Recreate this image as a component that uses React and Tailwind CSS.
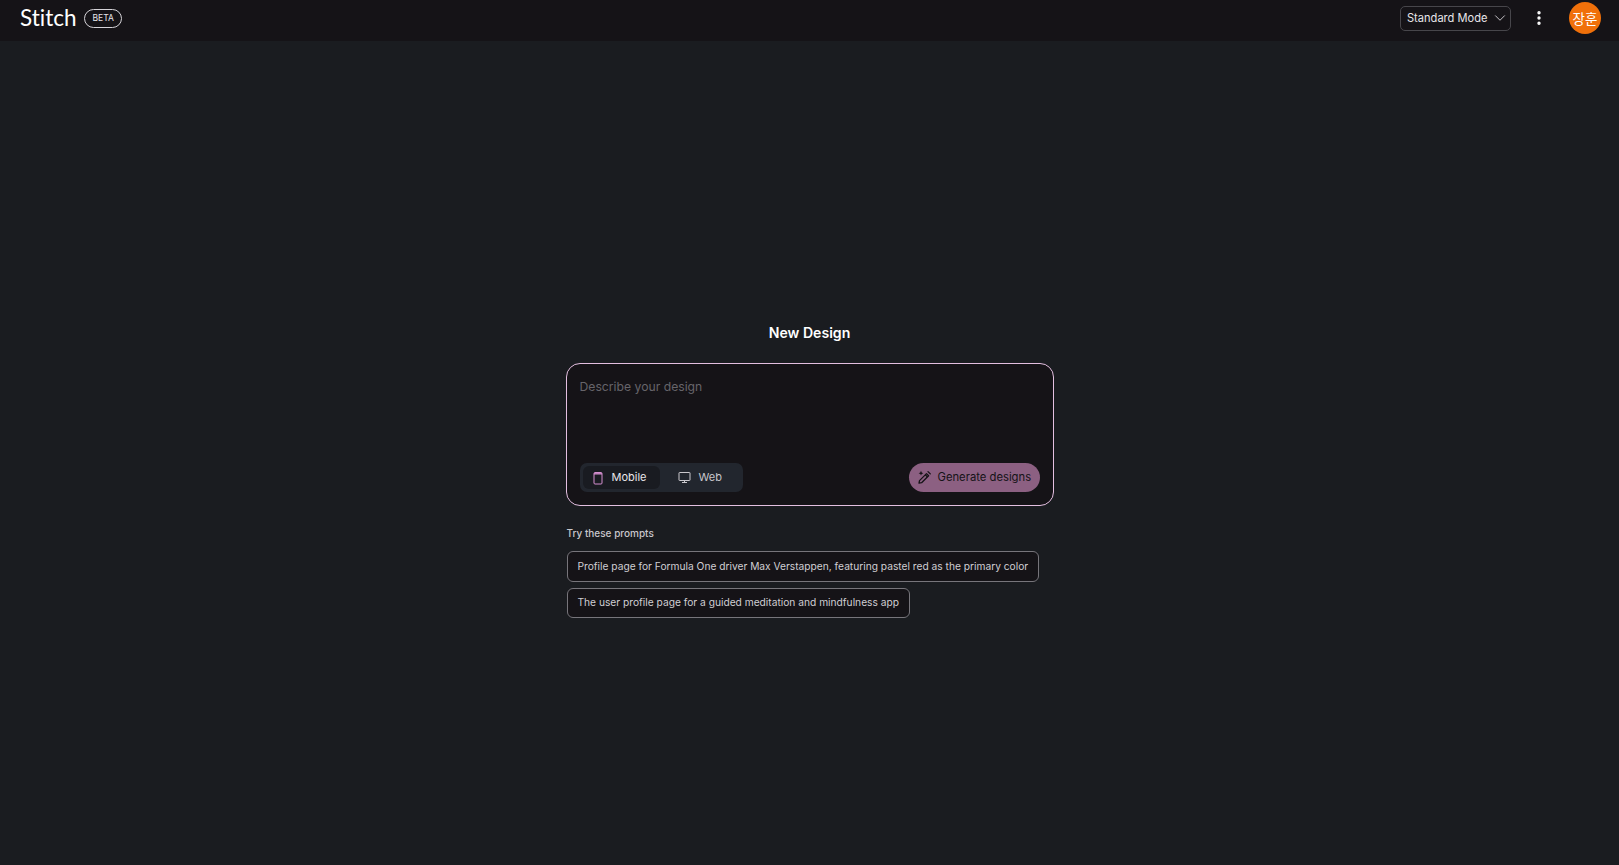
import { ChevronDown, EllipsisVertical } from 'lucide-react';

const prompts = [
  'Profile page for Formula One driver Max Verstappen, featuring pastel red as the primary color',
  'The user profile page for a guided meditation and mindfulness app',
];

const PhoneIcon = () => (
  <svg className="text-[#d58fd0]" width="10" height="14" viewBox="0 0 10 14" fill="none" stroke="currentColor" strokeWidth="1">
    <rect x="1" y="1.5" width="8" height="11.5" rx="1" />
    <path d="M1 2.8h8" strokeWidth="1.4" />
  </svg>
);

const DesktopIcon = () => (
  <svg width="13" height="13" viewBox="0 0 13 13" fill="none" stroke="currentColor" strokeWidth="1">
    <rect x="1" y="1.5" width="11" height="8" rx="0.5" />
    <path d="M6.5 9.5v2M4 11.5h5" />
  </svg>
);

const WandIcon = () => (
  <svg width="15" height="15" viewBox="0 0 15 15" fill="none" stroke="currentColor" strokeWidth="1.3">
    <path d="M2 13.2l.5-2.6 7-7 2.1 2.1-7 7z" strokeLinejoin="round" />
    <path d="M8.3 4.8l2.1 2.1" />
    <path d="M11 1.6l2.3 2.3" strokeLinecap="round" />
    <path d="M4 .8l.7 1.7 1.7.7-1.7.7L4 5.6l-.7-1.7L1.6 3.2l1.7-.7z" fill="currentColor" stroke="none" />
  </svg>
);

const Header = () => (
  <header className="flex h-[41px] items-center justify-between bg-[#151317] pb-[5px] pl-5 pr-[18px]">
    <div className="flex items-center gap-2">
      <span className="font-['Lato',sans-serif] text-[22.5px] leading-none text-white [font-variant-ligatures:none]">Stitch</span>
      <span className="rounded-full border border-[#d5d3d8] px-[7px] text-[8.5px] leading-[17px] text-[#e5e3e8]">BETA</span>
    </div>
    <div className="flex items-center">
      <button className="flex h-[25px] w-[111px] items-center justify-between whitespace-nowrap rounded-[5px] border border-[#47464b] pl-[6px] pr-px text-[11.1px] text-[#e8e6ea]">
        <span className="pt-px">Standard Mode</span>
        <ChevronDown size={18} strokeWidth={1.1} />
      </button>
      <EllipsisVertical className="ml-[19px] text-white" size={18} strokeWidth={2.5} />
      <div className="ml-[21px] flex h-8 w-8 items-center justify-center rounded-full bg-[#f0700a] font-['Noto_Sans_CJK_KR',sans-serif] text-[13.5px] text-white">
        장훈
      </div>
    </div>
  </header>
);

const Composer = () => (
  <div className="flex h-[143px] flex-col justify-between rounded-[14px] border border-[#e3bfe0] bg-[#151317] p-[13px]">
    <p className="text-[12.2px] leading-5 text-[#66646a]">Describe your design</p>
    <div className="flex items-center justify-between">
      <div className="flex h-[29px] w-[163px] items-center rounded-[7px] bg-[#22262e] p-[3px] text-[11px]">
        <div className="flex h-[23px] w-[77px] items-center gap-[9px] rounded-[6px] bg-[#191b21] pl-[10px] text-[#e8e6ea]">
          <PhoneIcon />
          Mobile
        </div>
        <div className="flex items-center gap-2 pl-[18px] text-[#c9c7cc]">
          <DesktopIcon />
          Web
        </div>
      </div>
      <button className="flex h-[29px] w-[131px] items-center gap-[6px] rounded-full bg-[#8c6082] pl-2 text-[11.25px] text-[#151317]">
        <WandIcon />
        Generate designs
      </button>
    </div>
  </div>
);

const Prompts = () => (
  <section className="ml-px mt-[19px]">
    <h2 className="text-[10px] font-medium leading-4 text-[#c9c7cc]">Try these prompts</h2>
    <div className="mt-[10px] flex flex-col items-start gap-[6px]">
      {prompts.map((text) => (
        <button
          key={text}
          className="h-[30px] whitespace-nowrap rounded-[6px] border border-[#77757b] bg-[#151317] px-[10px] text-[10.21px] text-[#d0ced3] first:h-[31px]"
        >
          {text}
        </button>
      ))}
    </div>
  </section>
);

export default function App() {
  return (
    <div className="flex min-h-[865px] flex-col bg-[#1a1c20] font-['Inter',sans-serif]">
      <Header />
      <main className="mx-auto w-[488px] pt-[282px]">
        <h1 className="text-center text-[14.1px] font-semibold leading-5 text-white">New Design</h1>
        <div className="mt-[20px]">
          <Composer />
        </div>
        <Prompts />
      </main>
    </div>
  );
}
